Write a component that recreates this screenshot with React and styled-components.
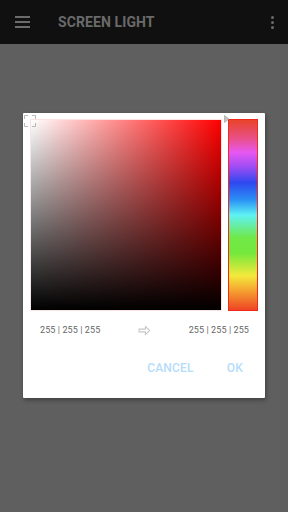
import styled, { createGlobalStyle } from "styled-components";

const GlobalStyle = createGlobalStyle`
  html, body {
    margin: 0;
    padding: 0;
    background: #5f5f5f;
    font-family: Roboto, "Liberation Sans", sans-serif;
  }
`;

const App = () => {
  return (
    <>
      <GlobalStyle />
      <Screen>
        <AppBar>
          <MenuIcon>
            <span />
            <span />
            <span />
          </MenuIcon>
          <Title>SCREEN LIGHT</Title>
          <MoreIcon>
            <i />
            <i />
            <i />
          </MoreIcon>
        </AppBar>
        <Backdrop>
          <Dialog>
            <PickerRow>
              <SvBox>
                <ExpandIcon viewBox="0 0 12 12">
                  <path
                    d="M0.5 4V0.5H4M8 0.5H11.5V4M11.5 8V11.5H8M4 11.5H0.5V8"
                    fill="none"
                    stroke="#b8b8b8"
                    strokeWidth="1"
                  />
                </ExpandIcon>
                <SvSquare />
              </SvBox>
              <HueBox>
                <HueMarker viewBox="0 0 6 8">
                  <path d="M0.5 0.5L5 4L0.5 7.5Z" fill="#c4c4c4" stroke="#9a9a9a" strokeWidth="0.6" />
                </HueMarker>
                <HueBar />
              </HueBox>
            </PickerRow>
            <ValuesRow>
              <ValueText>255 | 255 | 255</ValueText>
              <ArrowIcon viewBox="0 0 14 12">
                <path
                  d="M1 4.5H8V1.5L12.5 6L8 10.5V7.5H1Z"
                  fill="none"
                  stroke="#c8c8c8"
                  strokeWidth="1.2"
                  strokeLinejoin="round"
                />
              </ArrowIcon>
              <ValueText>255 | 255 | 255</ValueText>
            </ValuesRow>
            <Actions>
              <ActionButton>CANCEL</ActionButton>
              <ActionButton>OK</ActionButton>
            </Actions>
          </Dialog>
        </Backdrop>
      </Screen>
    </>
  );
};

export default App;

const Screen = styled.div`
  width: 288px;
  height: 512px;
  display: flex;
  flex-direction: column;
  background: #5f5f5f;
`;

const AppBar = styled.div`
  height: 44px;
  background: #101010;
  display: flex;
  align-items: center;
  padding: 0 14px 0 15px;
  box-sizing: border-box;
`;

const MenuIcon = styled.div`
  width: 15px;
  display: flex;
  flex-direction: column;
  gap: 3px;
  span {
    display: block;
    height: 2px;
    background: #6b6b6b;
  }
`;

const Title = styled.div`
  margin-left: 28px;
  flex: 1;
  font-size: 14px;
  font-weight: 700;
  color: #6a6a6a;
  letter-spacing: 0.1px;
`;

const MoreIcon = styled.div`
  display: flex;
  flex-direction: column;
  gap: 2px;
  i {
    display: block;
    width: 3px;
    height: 3px;
    border-radius: 50%;
    background: #6b6b6b;
  }
`;

const Backdrop = styled.div`
  flex: 1;
  display: flex;
  justify-content: center;
  padding-top: 69px;
`;

const Dialog = styled.div`
  width: 242px;
  height: 285px;
  background: #fff;
  box-shadow: 1px 2px 4px rgba(0, 0, 0, 0.35);
  border-radius: 1px;
  box-sizing: border-box;
  padding: 6px 0 0 7px;
  display: flex;
  flex-direction: column;
`;

const PickerRow = styled.div`
  display: flex;
  gap: 1px;
`;

const SvBox = styled.div`
  position: relative;
`;

const ExpandIcon = styled.svg`
  position: absolute;
  left: -6px;
  top: -4px;
  width: 12px;
  height: 12px;
`;

const SvSquare = styled.div`
  width: 192px;
  height: 192px;
  box-sizing: border-box;
  border: 1px solid #fbe3e3;
  background: linear-gradient(to bottom, rgba(0, 0, 0, 0), #000),
    linear-gradient(to right, #fff, #ff0000);
`;

const HueBox = styled.div`
  position: relative;
  padding-left: 5px;
`;

const HueMarker = styled.svg`
  position: absolute;
  left: 1px;
  top: -4px;
  width: 6px;
  height: 8px;
`;

const HueBar = styled.div`
  width: 30px;
  height: 192px;
  box-sizing: border-box;
  border: 1px solid #f02a1a;
  background: linear-gradient(
    to bottom,
    #e8442a 0%,
    #e8508a 10%,
    #e858f2 17%,
    #9a4cf4 25%,
    #2e48f0 33%,
    #2a90f4 42%,
    #5ef2f4 50%,
    #70e848 62%,
    #74e83c 70%,
    #f4ea3c 82%,
    #f4a030 90%,
    #ee4424 100%
  );
`;

const ValuesRow = styled.div`
  display: flex;
  align-items: center;
  justify-content: space-between;
  margin-top: 13px;
  padding: 0 16px 0 10px;
  height: 12px;
`;

const ValueText = styled.span`
  font-size: 9px;
  color: #666;
  letter-spacing: 0.1px;
`;

const ArrowIcon = styled.svg`
  width: 13px;
  height: 11px;
`;

const Actions = styled.div`
  display: flex;
  justify-content: flex-end;
  gap: 33px;
  margin-top: 25px;
  padding-right: 22px;
`;

const ActionButton = styled.button`
  background: none;
  border: none;
  padding: 0;
  font-family: Roboto, "Liberation Sans", sans-serif;
  font-size: 12px;
  font-weight: 500;
  color: #b5dcfb;
  letter-spacing: 0.2px;
`;
